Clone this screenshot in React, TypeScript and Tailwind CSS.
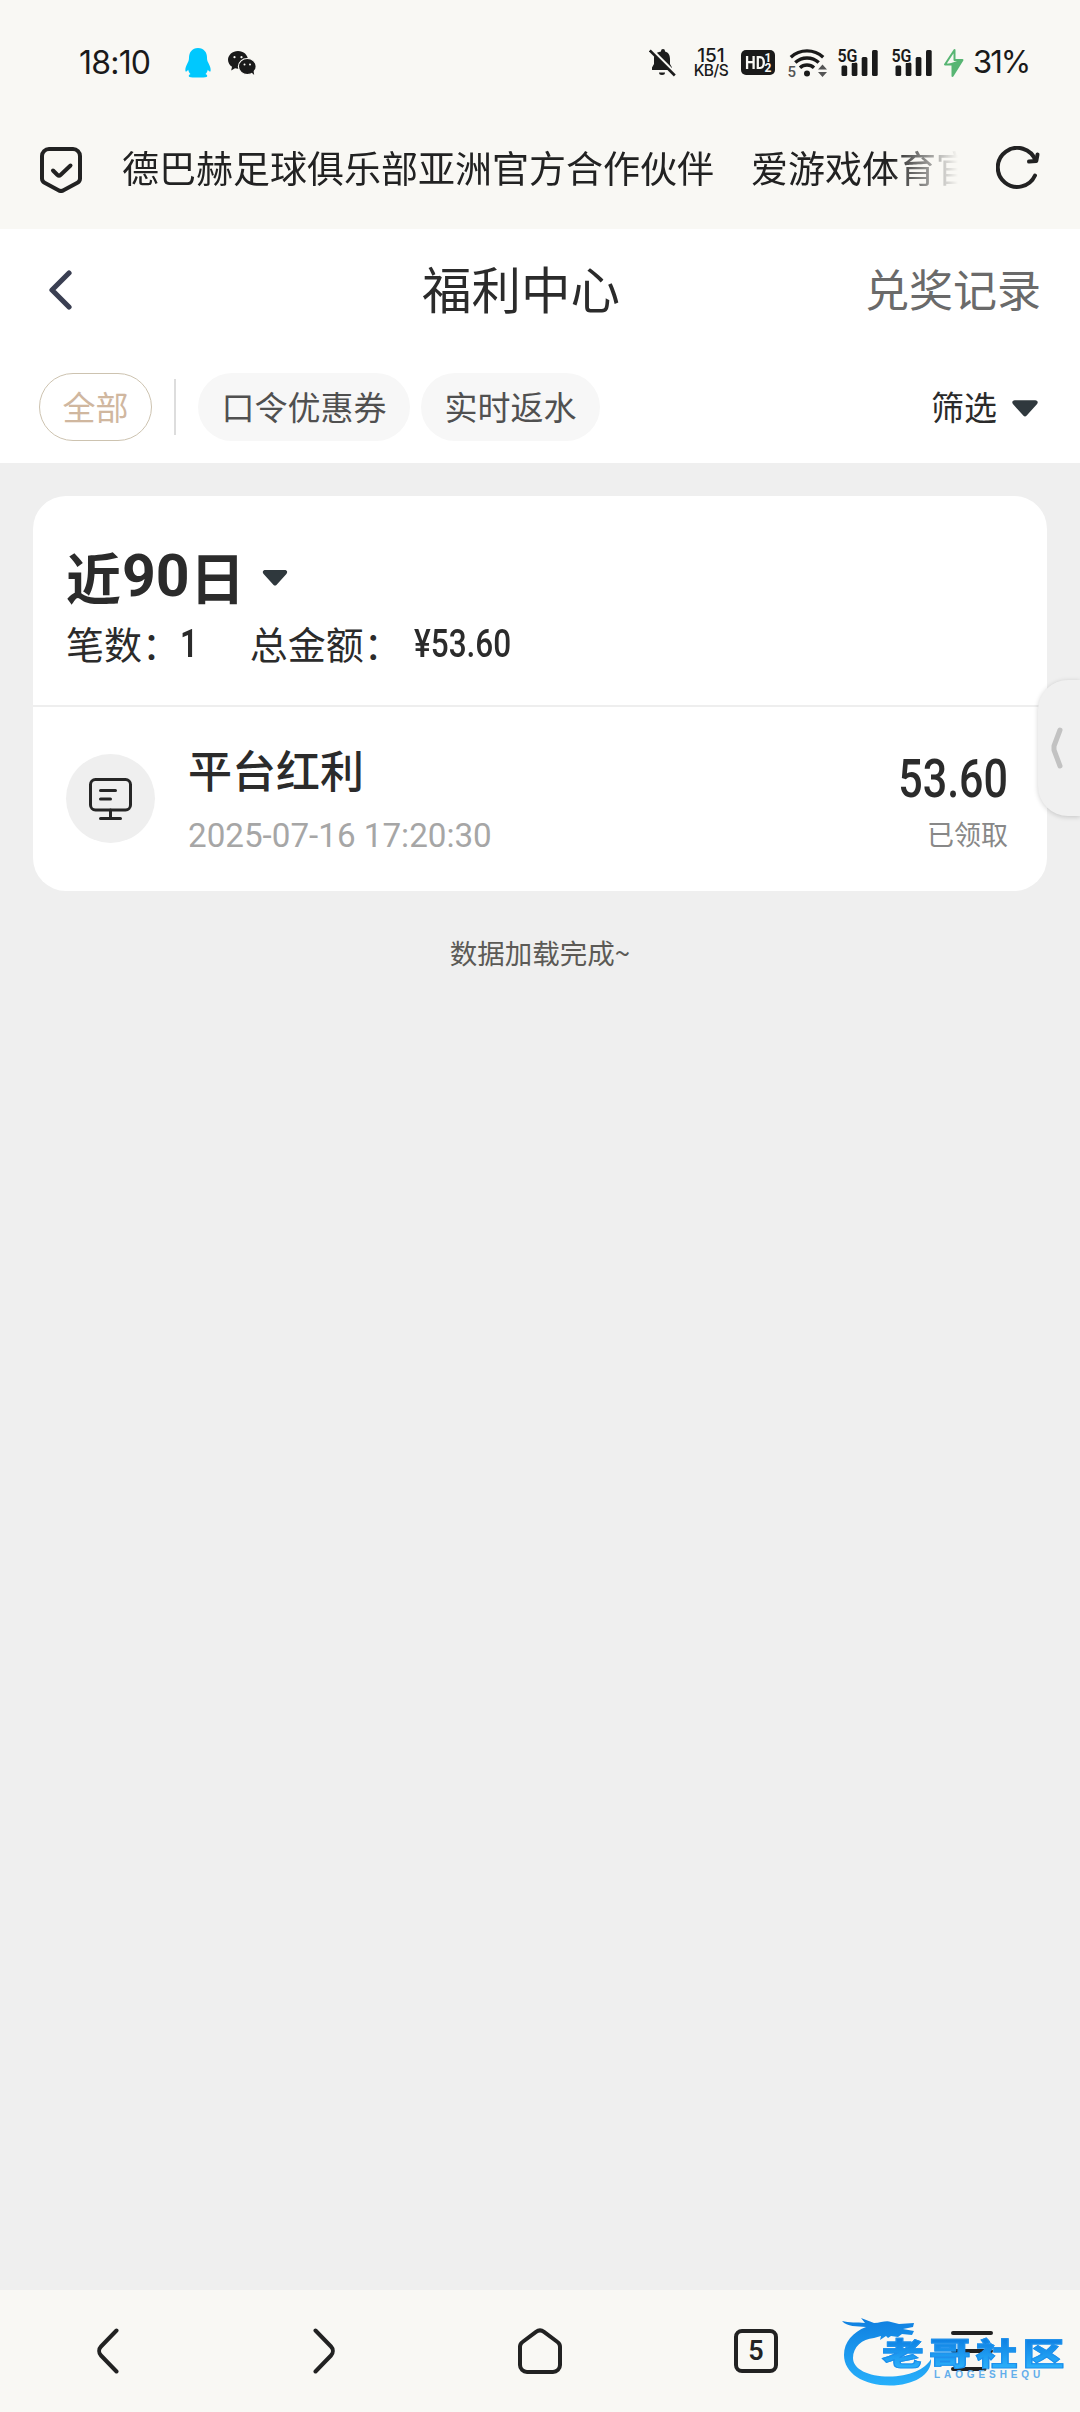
import React, { useState } from 'react';

const BellOffIcon: React.FC = () => (
  <svg className="h-7 w-[27px]" viewBox="0 0 27 28" fill="none">
    <path d="M12 2.500V2a2 2 0 014 0v.5c3.600 1 5 3.800 5 7.500v5l2 3.500v2.500H3v-2.500l2-3.500V10c0-3.700 1.400-6.500 7-7.500z" fill="#1c1c1c" />
    <path d="M10 23.500h6a3 2.500 0 01-6 0z" fill="#1c1c1c" />
    <path d="M2.500 .5l25 25" stroke="#f9f8f4" strokeWidth="3" />
    <path d="M.8 1.500l25 25" stroke="#1c1c1c" strokeWidth="2.600" />
  </svg>
);

const QQIcon: React.FC = () => (
  <svg className="h-[30px] w-[26px]" viewBox="0 0 26 30" fill="#00c8fe">
    <path d="M13 0c6 0 9 4.500 9 9.500 0 2 .3 3.500 1.300 5.200C24.800 17.500 26 20.500 25.600 23c-.3 1.300-1.600.4-2.800-1.200-.4 1.800-1.200 3.200-2.300 4.300 1.400.6 2 1.300 1.600 2.500-.5 1.200-4.600 1-9.100 1s-8.600.2-9.100-1c-.4-1.200.2-1.900 1.600-2.500-1.100-1.100-1.900-2.500-2.300-4.300C2 23.400.7 24.300.4 23c-.4-2.500.8-5.500 2.300-8.300C3.700 13 4 11.500 4 9.500 4 4.500 7 0 13 0z" />
  </svg>
);

const WechatIcon: React.FC = () => (
  <svg className="h-6 w-7" viewBox="0 0 28 24" fill="#1a1a1a">
    <path d="M10 0c5.500 0 10 4 10 8.800 0 5-4.500 9-10 9-1 0-2-.2-3-.5L3.200 19.500l.8-3.700C1.600 14.200 0 11.700 0 8.800 0 4 4.500 0 10 0z" />
    <ellipse cx="19.300" cy="15.500" rx="8.900" ry="8" stroke="#f9f8f4" strokeWidth="1.200" />
    <path d="M23 21l3.200 3-.7-4z" />
    <g fill="#f9f8f4">
      <circle cx="6.500" cy="6.200" r="1.100" />
      <circle cx="13.500" cy="6.200" r="1.100" />
      <circle cx="16.500" cy="13.500" r="1" />
      <circle cx="22" cy="13.500" r="1" />
    </g>
  </svg>
);

const WifiIcon: React.FC = () => (
  <svg className="h-[30px] w-10 overflow-visible" viewBox="0 0 40 30" fill="none">
    <g stroke="#1a1a1a" strokeWidth="3.400">
      <path d="M2.800 9.200a24 24 0 0132.400 0" />
      <path d="M7.300 14.600a17 17 0 0123.400 0" />
      <path d="M12 19.800a10.200 10.200 0 0114 0" />
    </g>
    <circle cx="19" cy="25.500" r="3" fill="#1a1a1a" />
    <text x="-.5" y="28.500" fontSize="15" fontFamily="Roboto" fontWeight="500" fill="#555">5</text>
    <path d="M30 21.500l4.500-5 4.500 5zM30 24l4.500 5 4.500-5z" fill="#555" />
  </svg>
);

const SignalIcon: React.FC = () => (
  <svg className="h-[29px] w-10 overflow-visible" viewBox="0 0 40 29" fill="#1a1a1a">
    <rect x="3.500" y="17.500" width="5.700" height="10.500" rx="1.500" />
    <rect x="13.700" y="14.500" width="5.700" height="13.500" rx="1.500" />
    <rect x="23.700" y="9" width="5.700" height="19" rx="1.500" />
    <rect x="34" y="2" width="5.700" height="26" rx="1.500" />
    <text x="-.5" y="13.500" fontSize="18" fontFamily="Roboto" fontWeight="600" textLength="20" lengthAdjust="spacingAndGlyphs" stroke="#f9f8f4" strokeWidth="2" paintOrder="stroke">5G</text>
  </svg>
);

const BoltIcon: React.FC = () => (
  <svg className="h-[30px] w-[21px]" viewBox="0 0 21 30" fill="none">
    <path d="M11.500 2L2 16.500h7.500V28L19.500 12H11.500z" stroke="#58b573" strokeWidth="2" strokeLinejoin="round" />
    <path d="M4 16.500h5.500V28L19.500 12l-4 .5z" fill="#58b573" />
  </svg>
);

const CaretDown: React.FC<{ className: string }> = ({ className }) => (
  <svg className={className} viewBox="0 0 28 18" fill="#2f383d">
    <path d="M3 0h22c2.600 0 3.600 2.600 1.800 4.400L15.600 16.800c-.9 1-2.300 1-3.200 0L1.200 4.400C-.6 2.600.4 0 3 0z" />
  </svg>
);

const StatusBar: React.FC = () => (
  <div className="flex h-[110px] items-center pt-[15px] pl-[79px] font-['Inter',sans-serif] text-[#1a1a1a]">
    <span className="w-[106px] text-[32px] tracking-[-0.025em]">18:10</span>
    <QQIcon />
    <div className="ml-[17px]">
      <WechatIcon />
    </div>
    <div className="ml-[393px] flex items-center">
      <BellOffIcon />
      <div className="ml-[17px] flex w-[36px] flex-col items-center font-medium">
        <span className="text-[19px] leading-[17px]">151</span>
        <span className="text-[15.500px] leading-[14px] tracking-[-0.03em]">KB/S</span>
      </div>
      <div className="ml-[12px] flex h-[25px] w-[34px] items-center justify-center rounded-[5px] bg-[#1a1a1a] font-['Roboto',sans-serif] text-[#f9f8f4]">
        <span className="w-[20px] origin-left scale-x-[0.84] text-[18px] font-bold">HD</span>
        <span className="flex flex-col text-[12px] leading-[10px] font-bold">
          <span>1</span>
          <span>2</span>
        </span>
      </div>
      <div className="ml-[13px]"><WifiIcon /></div>
      <div className="ml-[10px]"><SignalIcon /></div>
      <div className="ml-[14px]"><SignalIcon /></div>
      <div className="ml-[11px]"><BoltIcon /></div>
      <span className="ml-[9px] text-[31px] tracking-[-0.065em]">31%</span>
    </div>
  </div>
);

const AddressBar: React.FC = () => (
  <div className="flex h-[119px] items-center pl-10 text-[#222]">
    <svg className="h-[46px] w-[42px] shrink-0" viewBox="0 0 42 46" fill="none" stroke="#222" strokeWidth="4" strokeLinecap="round" strokeLinejoin="round">
      <path d="M9 2h24a7 7 0 017 7v22.500a5 5 0 01-2.600 4.300L23.500 43.300a5 5 0 01-5 0L4.600 35.800A5 5 0 012 31.500V9a7 7 0 017-7z" />
      <path d="M13 23.500l4.500 4.500a2.200 2.200 0 003 0L30.500 18.500" />
    </svg>
    <div className="mb-[5px] ml-10 w-[836px] overflow-hidden text-[37px] leading-[54px] whitespace-nowrap [mask-image:linear-gradient(to_right,black_770px,transparent_836px)]">
      德巴赫足球俱乐部亚洲官方合作伙伴　爱游戏体育官网
    </div>
    <svg className="mb-[3px] ml-[38px] h-[44px] w-[44px] shrink-0" viewBox="0 0 44 44" fill="none" stroke="#222" strokeWidth="4" strokeLinecap="round" strokeLinejoin="round">
      <path d="M39 29.500A19.500 19.500 0 1139.500 14.500" />
      <path d="M41.500 8.500l-1.200 6.500-7.300.5" />
    </svg>
  </div>
);

const filters = ['口令优惠券', '实时返水'];

const FilterRow: React.FC = () => {
  const [active, setActive] = useState<string>('全部');

  const chipClass = (name: string) =>
    name === active
      ? 'border border-[#cdc3b0] bg-white text-[#d0b79f]'
      : 'border border-transparent bg-[#f7f7f7] text-[#505050]';

  return (
    <div className="flex h-[112px] items-center pr-[42px] pl-[39px] text-[33px]">
      <button onClick={() => setActive('全部')} className={`rounded-full px-[22.500px] pb-[2px] leading-[64px] ${chipClass('全部')}`}>
        全部
      </button>
      <div className="mr-[22px] ml-[22px] h-14 w-[2px] bg-[#dddddd]" />
      <div className="flex gap-[11px]">
        {filters.map((name) => (
          <button key={name} onClick={() => setActive(name)} className={`rounded-full px-[22.500px] pb-[2px] leading-[64px] ${chipClass(name)}`}>
            {name}
          </button>
        ))}
      </div>
      <button className="ml-auto flex items-center gap-[15px] text-[#2b2b2b]">
        <span className="pb-[2px] leading-[64px]">筛选</span>
        <CaretDown className="mt-[3px] h-[17px] w-[26px]" />
      </button>
    </div>
  );
};

const RecordCard: React.FC = () => (
  <div className="mx-[33px] mt-[33px] h-[395px] rounded-[33px] bg-white text-[#2b2b2b]">
    <div className="h-[211px] border-b-2 border-[#eeeeee] px-[33px] pt-[43px]">
      <div className="flex h-[72px] items-center text-[55px] leading-[72px] font-bold">
        近
        <span className="ml-px w-[68px] pt-[2px] font-['Roboto',sans-serif] text-[59px]">90</span>
        日
        <CaretDown className="mt-[5px] ml-[17px] h-4 w-[26px]" />
      </div>
      <div className="mt-[5px] flex h-[54px] items-center text-[38px] leading-[54px]">
        笔数：
        <span className="origin-left scale-x-[0.83] pt-[2px] font-['Roboto',sans-serif] font-semibold">1</span>
        <span className="ml-[48px]">总金额：</span>
        <span className="ml-[12px] origin-left scale-x-[0.83] pt-[2px] font-['Roboto',sans-serif] font-medium">¥53.60</span>
      </div>
    </div>
    <div className="flex px-[33px]">
      <div className="mt-[47px] flex h-[89px] w-[89px] items-center justify-center rounded-full bg-[#efefef]">
        <svg className="h-[42px] w-[43px]" viewBox="0 0 43 42" fill="none" stroke="#262626" strokeWidth="3" strokeLinecap="round">
          <rect x="1.500" y="1.500" width="40" height="30.500" rx="5" />
          <path d="M11.500 12.500h15M11.500 21h10M21.500 32v8M11.500 40.500h20" />
        </svg>
      </div>
      <div className="ml-[33px] flex flex-col">
        <span className="mt-[30px] text-[44px] leading-[64px] font-medium">平台红利</span>
        <span className="mt-[16px] font-['Roboto',sans-serif] text-[33.200px] leading-[38px] text-[#a6a6a6]">2025-07-16 17:20:30</span>
      </div>
      <div className="mr-[6px] ml-auto flex flex-col items-end">
        <span className="mt-[39px] origin-right scale-x-[0.79] font-['Roboto',sans-serif] text-[54.500px] leading-[64px] font-medium">53.60</span>
        <span className="mt-[4px] text-[27px] leading-[40px] text-[#888888]">已领取</span>
      </div>
    </div>
  </div>
);

const Watermark: React.FC = () => (
  <div className="pointer-events-none absolute top-[25px] left-[842px] h-[72px] w-[224px]">
    <svg className="h-[72px] w-[92px]" viewBox="0 0 92 72">
      <defs>
        <linearGradient id="dragon" x1="0" y1="0" x2="0" y2="1">
          <stop offset="0" stopColor="#0f7fe0" />
          <stop offset="1" stopColor="#27b0fb" />
        </linearGradient>
      </defs>
      <path
        fill="url(#dragon)"
        d="M0 6c7 2 15 1 23 2l-4-5 13 5c7 0 12-3 17-1l8 2 15-1-1 4-10 2 11 2-2 4-10-1-4 3-7-1-3 2-2-2-6 4 1-4-7 2C20 24 11 32 11 43c0 11 15 18.500 36 18.500 20 0 36-7 42-17.500C90 60 71 70.500 48 70.500 21 70.500 2 58 2 40 2 27 11 17 24 12 15 11 5 12 0 6z"
      />
    </svg>
    <span className="absolute top-[21px] left-[40px] origin-left scale-x-[1.340] bg-linear-to-b from-[#0c7be0] to-[#2bb0fa] bg-clip-text text-[31px] leading-[32px] font-black tracking-[0.13em] whitespace-nowrap text-transparent [-webkit-text-stroke:1px_#1d90ec]">
      老哥社区
    </span>
    <span className="absolute top-[54px] left-[92px] font-['Liberation_Sans',sans-serif] text-[10px] leading-[11px] font-bold tracking-[3.900px] text-[#62aeeb]">
      LAOGESHEQU
    </span>
  </div>
);

const BottomNav: React.FC = () => (
  <div className="relative mt-auto grid h-[122px] grid-cols-5 items-center justify-items-center bg-[#f9f8f4]">
    <svg className="h-[46px] w-[22px]" viewBox="0 0 22 46" fill="none" stroke="#222" strokeWidth="4" strokeLinecap="round">
      <path d="M19.500 2.500L4 18.500a6.500 6.500 0 000 9L19.500 43.500" />
    </svg>
    <svg className="h-[46px] w-[22px]" viewBox="0 0 22 46" fill="none" stroke="#222" strokeWidth="4" strokeLinecap="round">
      <path d="M2.500 2.500L18 18.500a6.500 6.500 0 010 9L2.500 43.500" />
    </svg>
    <svg className="h-[46px] w-[46px]" viewBox="0 0 46 46" fill="none" stroke="#222" strokeWidth="4">
      <path d="M3 19a6 6 0 012.500-5L19 3.800a7 7 0 018 0L40.500 14a6 6 0 012.500 5V37a7 7 0 01-7 7H10a7 7 0 01-7-7z" />
    </svg>
    <div className="flex h-11 w-11 items-center justify-center rounded-[8px] border-4 border-[#222] font-['Roboto',sans-serif] text-[27px] leading-none font-semibold text-[#222]">
      5
    </div>
    <svg className="h-[42px] w-[42px]" viewBox="0 0 42 42" stroke="#222" strokeWidth="4" strokeLinecap="round">
      <path d="M2 3h38M2 21h38M2 39h31.500" />
    </svg>
    <Watermark />
  </div>
);

const App: React.FC = () => {
  return (
    <div className="relative flex h-[2412px] w-[1080px] flex-col overflow-hidden bg-[#efefef] font-['Noto_Sans_CJK_SC',sans-serif]">
      <div className="bg-[#f9f8f4]">
        <StatusBar />
        <AddressBar />
      </div>

      <div className="h-[234px] bg-white">
        <div className="flex h-[122px] items-center pr-[39px] pl-[49px]">
          <svg className="h-10 w-[23px]" viewBox="0 0 23 40" fill="none" stroke="#3a3f52" strokeWidth="5.200" strokeLinecap="round" strokeLinejoin="round">
            <path d="M20 3L3 20l17 17" />
          </svg>
          <h1 className="mb-[4px] ml-[350px] text-[49.500px] leading-[70px] text-[#2b2b2b]">福利中心</h1>
          <span className="mb-[4px] ml-auto text-[44px] leading-[64px] text-[#6a6a6a]">兑奖记录</span>
        </div>
        <FilterRow />
      </div>

      <RecordCard />

      <p className="mt-[41px] text-center text-[27.500px] leading-[40px] text-[#5c5a56]">数据加载完成~</p>

      {/* Floating drawer handle */}
      <button className="absolute top-[680px] right-0 flex h-[136px] w-[42px] items-center rounded-l-[30px] bg-[#f0f0f0] pl-[13px] shadow-[0_1px_5px_rgba(0,0,0,0.18)]">
        <svg className="h-[42px] w-[12px]" viewBox="0 0 12 42" fill="none" stroke="#c2c2c2" strokeWidth="5" strokeLinecap="round" strokeLinejoin="round">
          <path d="M9 3L3 19v4l6 16" />
        </svg>
      </button>

      <BottomNav />
    </div>
  );
};

export default App;
